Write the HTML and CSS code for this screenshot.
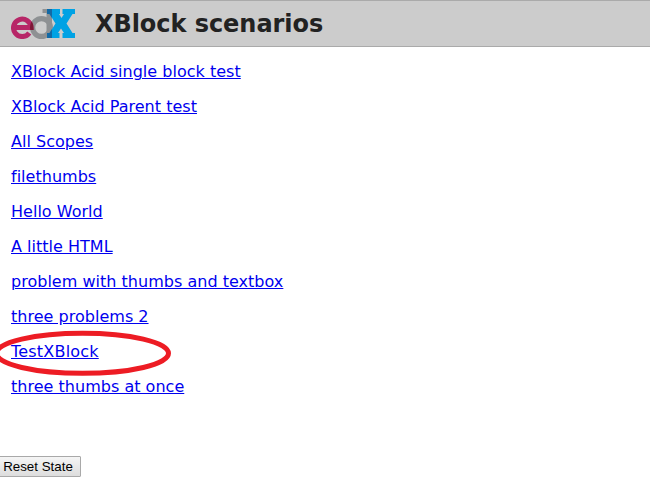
FILE: index.html
```
<!DOCTYPE html>
<html lang="en">
<head>
<meta charset="utf-8">
<title>XBlock scenarios</title>
<link rel="stylesheet" href="styles.css">
</head>
<body>
<header class="header">
<svg class="logo" viewBox="0 0 65 31" width="65" height="31" aria-label="edX">
<defs>
<clipPath id="bowl"><circle cx="30.500" cy="19.500" r="11.500"/></clipPath>
</defs>
<path d="M31.500 1H41V30H35.500V5H31.500Z" fill="#8e9193"/>
<circle cx="30.500" cy="19.500" r="8.900" fill="none" stroke="#8e9193" stroke-width="5.200"/>
<path d="M3 19.500H20A8.750 8.750 0 1 0 18.300 25" fill="none" stroke="#b72667" stroke-width="5"/>
<path d="M3 19.500H20A8.750 8.750 0 1 0 18.300 25" fill="none" stroke="#7d1836" stroke-width="5" clip-path="url(#bowl)"/>
<path d="M36 1H49V6H48L50.500 10L53 6H51.500V1H64V6H61.500L55.500 15.500L61.500 25H64V30H51.500V25H53L50 20.500L47 25H48.500V30H36V25H38.500L44.500 15.500L38.500 6H36Z" fill="#00a2e4"/>
<path d="M36 1H41V10L38.500 6H36ZM36 25H38.500L41 21V30H36Z" fill="#1269a5"/>
</svg>
<h1 class="title">XBlock scenarios</h1>
</header>
<main class="content">
<ul class="scenarios">
<li><a href="#">XBlock Acid single block test</a></li>
<li><a href="#">XBlock Acid Parent test</a></li>
<li><a href="#">All Scopes</a></li>
<li><a href="#">filethumbs</a></li>
<li><a href="#">Hello World</a></li>
<li><a href="#">A little HTML</a></li>
<li><a href="#">problem with thumbs and textbox</a></li>
<li><a href="#">three problems 2</a></li>
<li class="marked"><a href="#">TestXBlock</a><svg class="ring" width="190" height="50" viewBox="0 0 190 50"><ellipse cx="86.500" cy="25.300" rx="86" ry="20"/></svg></li>
<li><a href="#">three thumbs at once</a></li>
</ul>
</main>
<button class="reset">Reset State</button>
</body>
</html>
```
FILE: styles.css
```
body { margin: 0; background: #fff; font-family: "DejaVu Sans", sans-serif; font-size: 16px; overflow: hidden; }
.header { box-sizing: border-box; height: 47px; display: flex; align-items: center; gap: 19px; padding-left: 11px; background: #ccc; border-top: 1px solid #aaa; border-bottom: 1px solid #aaa; }
.title { margin: 0; padding-top: 2px; font-size: 24px; line-height: 35px; letter-spacing: -0.05px; color: #222; }
.content { padding: 7px 11px 0; }
.scenarios { margin: 0; padding: 0; list-style: none; font-variant-ligatures: none; letter-spacing: 0.02px; }
.scenarios li { height: 35px; line-height: 35px; }
.scenarios a { color: #00e; text-decoration: underline; }
.marked { position: relative; }
.marked a { letter-spacing: 0.2px; }
.ring { position: absolute; left: -15px; top: -6px; fill: none; stroke: #ed1c24; stroke-width: 5; }
.reset { box-sizing: border-box; display: block; width: 82px; height: 21px; margin: 52px 0 0 -1px; padding: 0 4px 0 0; border: 1px solid #a9a9a9; border-radius: 1px; background: linear-gradient(#f5f5f5, #ddd); color: #000; font: 13.333px/19px "Liberation Sans", sans-serif; }
```
